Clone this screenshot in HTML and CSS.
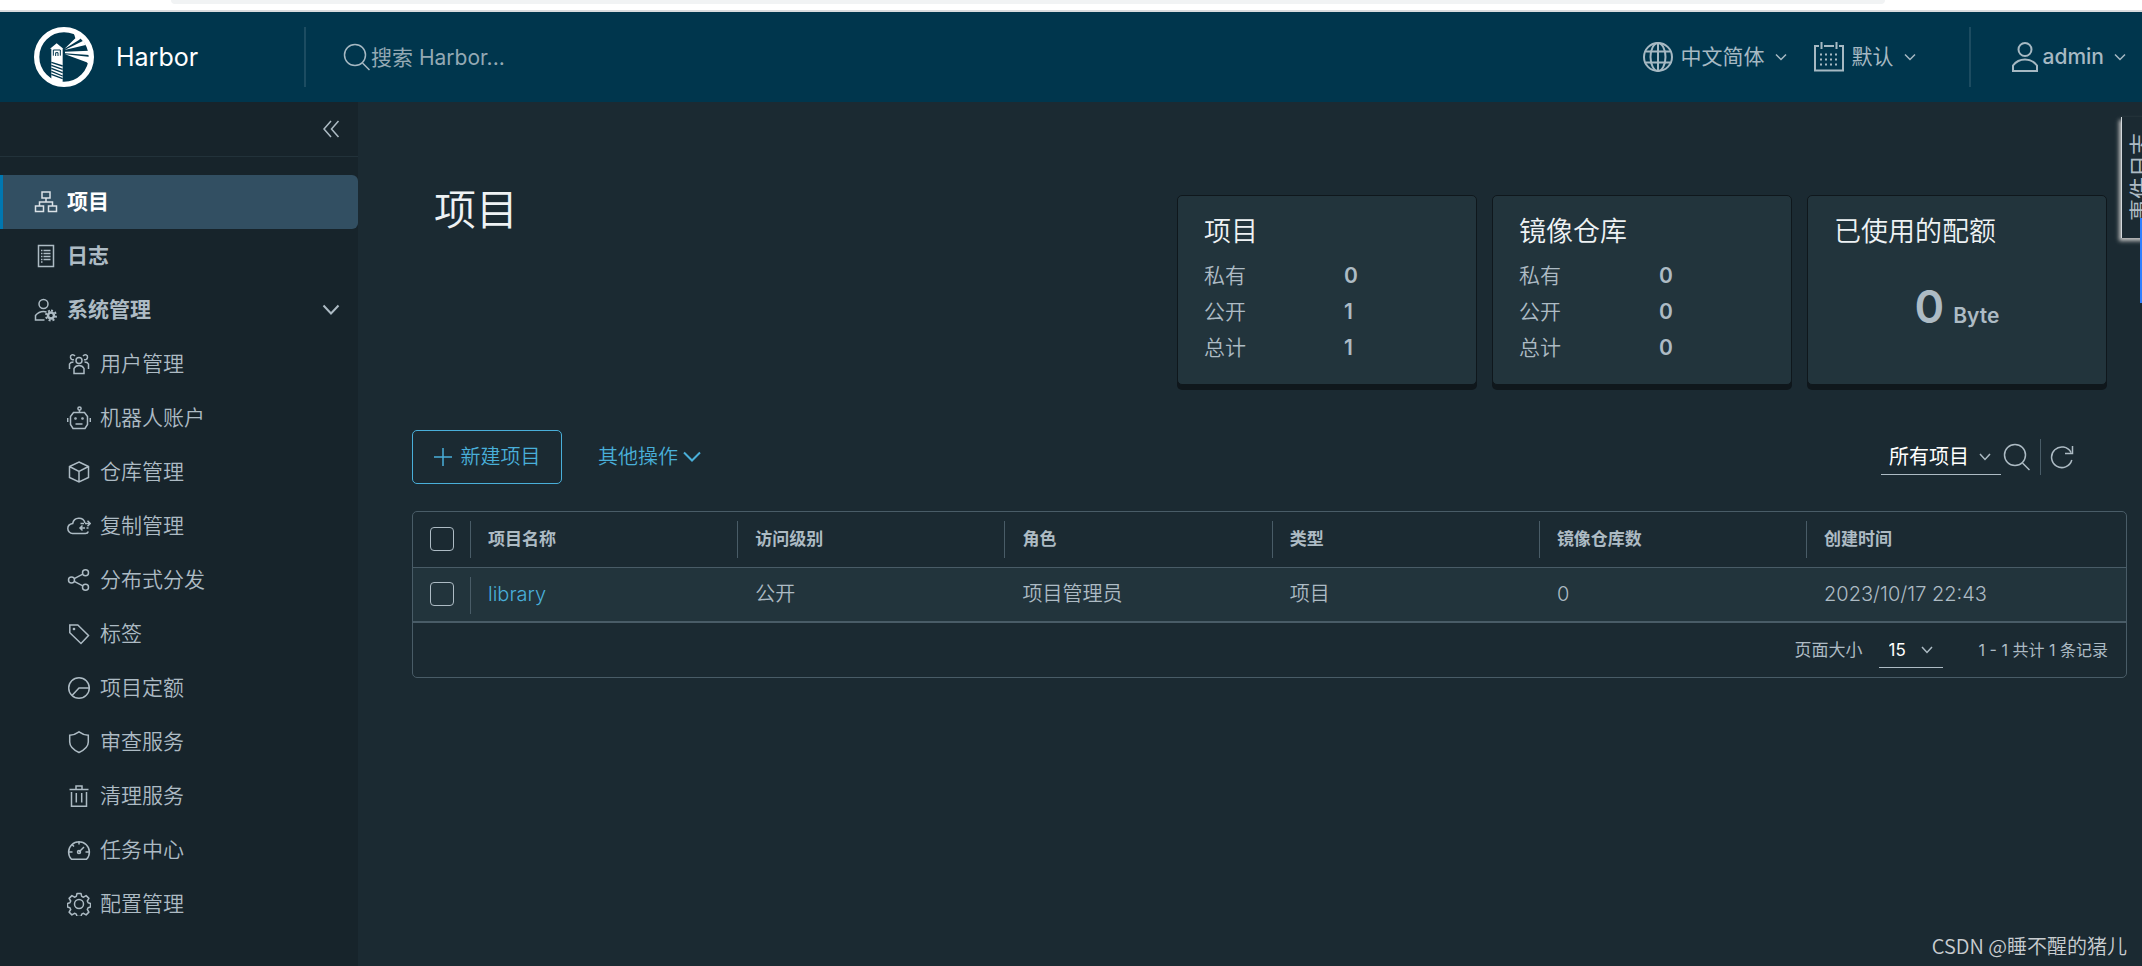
FILE: index.html
```html
<!DOCTYPE html>
<html lang="zh-CN">
<head>
<meta charset="utf-8">
<title>Harbor</title>
<link rel="stylesheet" href="styles.css">
</head>
<body>
<div class="page">
  <div class="browser-edge"><div class="address-bar"></div></div>

  <header class="header">
    <a class="brand" href="#">
      <svg class="logo" viewBox="42 36 180 180" aria-hidden="true">
        <circle cx="132" cy="126" r="82" fill="none" stroke="#fff" stroke-width="16"/>
        <path fill="#fff" d="M133 102 166 70 162 56 186 64 178 74zM134 105 190 77 197 90zM135 110 208 107 208 120 135 115zM135 118 212 126 206 148 200 142z"/>
        <path fill="#fff" d="M90 101 110 85 130 101zM94 101h34v98l-6 14-28-8z"/>
        <path fill="none" stroke="#00364d" stroke-width="3" d="M100 122v-17h21v17M107 123v-10h7v10"/>
        <path fill="none" stroke="#00364d" stroke-width="4" d="M94 142 128 153M94 151 128 163M94 160 128 173M94 169 128 183M94 178 128 191"/>
      </svg>
      <span class="brand-name">Harbor</span>
    </a>
    <label class="search">
      <svg class="icon-search" viewBox="0 0 28 28" aria-hidden="true"><circle cx="12" cy="12" r="10.5"/><path d="M19.500 20 26.500 27"/></svg>
      <input type="search" placeholder="搜索 Harbor..." aria-label="搜索 Harbor">
    </label>
    <div class="header-actions">
      <button class="menu-button menu-language" type="button">
        <svg class="icon-head" viewBox="0 0 30 30" aria-hidden="true"><circle cx="15" cy="15" r="14"/><ellipse cx="15" cy="15" rx="7.500" ry="14"/><path d="M15 1v28M3 9.500h24M3 20.500h24"/></svg>
        <span>中文简体</span>
        <svg class="caret" viewBox="0 0 12 8" aria-hidden="true"><path d="M1 1.500 6 6.500 11 1.500"/></svg>
      </button>
      <button class="menu-button menu-date" type="button">
        <svg class="icon-head" viewBox="0 0 30 30" aria-hidden="true"><path d="M5 4H1v24.500h28V4h-4M10 4h10M7.500 0v7M22.500 0v7"/><path class="dots" d="M6 12.500h18M6 17.500h18M6 22.500h18"/></svg>
        <span>默认</span>
        <svg class="caret" viewBox="0 0 12 8" aria-hidden="true"><path d="M1 1.500 6 6.500 11 1.500"/></svg>
      </button>
      <button class="menu-button menu-user" type="button">
        <svg class="icon-head" viewBox="0 0 30 30" aria-hidden="true"><circle cx="15" cy="7.500" r="6.500"/><path d="M3 29v-5.500C6 19.500 10 17.500 15 17.500s9 2 12 6V29z"/></svg>
        <span class="user-name">admin</span>
        <svg class="caret" viewBox="0 0 12 8" aria-hidden="true"><path d="M1 1.500 6 6.500 11 1.500"/></svg>
      </button>
    </div>
  </header>

  <div class="body">
    <nav class="sidebar" aria-label="主导航">
      <div class="sidebar-top">
        <button class="collapse" type="button" aria-label="收起">
          <svg viewBox="0 0 18 18" aria-hidden="true"><path d="M9 1 2 9 9 17M16.500 1 9.500 9 16.500 17"/></svg>
        </button>
      </div>
      <ul class="nav">
        <li><a class="nav-link active" href="#"><svg class="icon" viewBox="0 0 24 24" aria-hidden="true"><path d="M8 2h8v6H8zM1.500 16h8v5.500h-8zM14.500 16h8v5.500h-8zM12 8v4M5.500 16v-4h13v4"/></svg>项目</a></li>
        <li><a class="nav-link" href="#"><svg class="icon" viewBox="0 0 24 24" aria-hidden="true"><path d="M4.500 1.500h15v21h-15zM9.500 6.500h7M9.500 9.500h7M9.500 12.500h7M9.500 15.500h7M7 6.500h1.500M7 9.500h1.500M7 12.500h1.500M7 15.500h1.500M7 18h1.500"/></svg>日志</a></li>
        <li>
          <a class="nav-link" href="#"><svg class="icon" viewBox="0 0 24 24" aria-hidden="true"><circle cx="9.500" cy="6" r="4.500"/><path d="M10.500 22H1.500v-4.500c2-2.500 4.500-4 8-4 1 0 2 .2 3 .5"/><circle cx="17" cy="17.500" r="3" stroke-width="2.500"/><path stroke-width="2" stroke-dasharray="2 1.930" d="M17 12.500a5 5 0 1 1 0 10 5 5 0 1 1 0-10"/></svg>系统管理
            <svg class="nav-caret" viewBox="0 0 18 12" aria-hidden="true"><path d="M1.500 1.500 9 9.500 16.500 1.500"/></svg></a>
          <ul class="subnav">
            <li><a class="nav-link" href="#"><svg class="icon" viewBox="0 0 24 24" aria-hidden="true"><circle cx="12" cy="8.500" r="3"/><path d="M7 21.500v-5c1-2 3-3 5-3s4 1 5 3v5zM8 4C6 1.500 3 3 3.500 5.500S6 8 7 7.500M16 4c2-2.500 5-1 4.500 1.500S18 8 17 7.500M2.500 17v-5c.5-1 2-2 4-2M21.500 17v-5c-.5-1-2-2-4-2"/></svg>用户管理</a></li>
            <li><a class="nav-link" href="#"><svg class="icon" viewBox="0 0 24 24" aria-hidden="true"><circle cx="12.500" cy="2.500" r="1.600"/><path d="M12.500 4v3M6.500 6.500h11l3 4v8l-2.500 4H6l-2.500-4v-8zM.7 12v4M23.300 12v4M8.500 18h7"/><circle cx="8.500" cy="12.500" r=".6"/><circle cx="15.500" cy="12.500" r=".6"/></svg>机器人账户</a></li>
            <li><a class="nav-link" href="#"><svg class="icon" viewBox="0 0 24 24" aria-hidden="true"><path d="M12 2 21.500 6.500v11L12 22 2.500 17.500v-11zM2.500 6.500 12 11.500l9.500-5M12 11.500V22"/></svg>仓库管理</a></li>
            <li><a class="nav-link" href="#"><svg class="icon" viewBox="0 0 24 24" aria-hidden="true"><path d="M18 9a6.300 6.300 0 0 0-12.300.5C2.500 10 .8 12 .8 14.500S3 19.500 5.500 19.500h13c1.500 0 2.500-1 2.800-2"/><path d="M13.500 9.500h3.500M18 9.500h5M20.500 6.800 23.200 9.500l-2.700 2.700M21.500 14h-2M18 14h-5M15.500 11.500 13 14l2.500 2.500"/></svg>复制管理</a></li>
            <li><a class="nav-link" href="#"><svg class="icon" viewBox="0 0 24 24" aria-hidden="true"><circle cx="4.500" cy="12" r="3"/><circle cx="18.500" cy="4.800" r="3"/><circle cx="18.500" cy="19.200" r="3"/><path d="M7.200 10.600 15.800 6.200M7.200 13.400l8.600 4.400"/></svg>分布式分发</a></li>
            <li><a class="nav-link" href="#"><svg class="icon" viewBox="0 0 24 24" aria-hidden="true"><path d="M2.800 3h8L21.500 13.500 14 21.500 2.800 10.800z"/><circle cx="7" cy="7" r=".6"/></svg>标签</a></li>
            <li><a class="nav-link" href="#"><svg class="icon" viewBox="0 0 24 24" aria-hidden="true"><circle cx="12" cy="12" r="10.300"/><path d="M22.300 12H12L5 19.500"/></svg>项目定额</a></li>
            <li><a class="nav-link" href="#"><svg class="icon" viewBox="0 0 24 24" aria-hidden="true"><path d="M12 1.800C15 4 18 5 21.300 5.300V12c0 4.500-4 8-9.300 10.500C6.700 20 2.700 16.500 2.700 12V5.300C6 5 9 4 12 1.800z"/></svg>审查服务</a></li>
            <li><a class="nav-link" href="#"><svg class="icon" viewBox="0 0 24 24" aria-hidden="true"><path d="M2.500 5.500h19M4.500 8v14.300h15V8M9.300 9v9.500M14.700 9v9.500M9 5.500V2h6v3.500"/></svg>清理服务</a></li>
            <li><a class="nav-link" href="#"><svg class="icon" viewBox="0 0 24 24" aria-hidden="true"><path d="M4.500 21.300h15A10.400 10.400 0 1 0 4.500 21.300zM12 3v3.500M2 14h3.500M22 14h-3.500M5.500 7 7 8.500M12 14l5-5"/><circle cx="12" cy="14" r="1.500"/></svg>任务中心</a></li>
            <li><a class="nav-link" href="#"><svg class="icon" viewBox="0 0 24 24" aria-hidden="true"><circle cx="12" cy="12" r="4.500"/><path stroke-linejoin="round" d="M10 1.500h4l.7 2.900 1.800.8 2.600-1.600 2.800 2.800-1.600 2.600.8 1.800 2.400.7v3.500l-2.400.7-.8 1.800 1.600 2.600-2.800 2.800-2.600-1.600-1.800.8-.7 2.400h-4l-.7-2.400-1.800-.8-2.600 1.600-2.800-2.800 1.600-2.600-.8-1.800-2.400-.7v-3.500l2.400-.7.8-1.800-1.600-2.600 2.800-2.800 2.600 1.600 1.800-.8z"/></svg>配置管理</a></li>
          </ul>
        </li>
      </ul>
    </nav>

    <main class="content">
      <section class="overview">
        <h1 class="title">项目</h1>
        <div class="cards">
          <article class="card">
            <h2>项目</h2>
            <dl>
              <dt>私有</dt><dd>0</dd>
              <dt>公开</dt><dd>1</dd>
              <dt>总计</dt><dd>1</dd>
            </dl>
          </article>
          <article class="card">
            <h2>镜像仓库</h2>
            <dl>
              <dt>私有</dt><dd>0</dd>
              <dt>公开</dt><dd>0</dd>
              <dt>总计</dt><dd>0</dd>
            </dl>
          </article>
          <article class="card">
            <h2>已使用的配额</h2>
            <p class="quota"><span class="quota-value">0</span><span class="quota-unit">Byte</span></p>
          </article>
        </div>
      </section>

      <div class="toolbar">
        <button class="btn btn-outline" type="button">
          <svg class="icon-plus" viewBox="0 0 18 18" aria-hidden="true"><path d="M9 0v18M0 9h18"/></svg>新建项目
        </button>
        <button class="btn" type="button">其他操作<svg class="btn-caret" viewBox="0 0 18 12" aria-hidden="true"><path d="M1 1.500 9 9.500 17 1.500"/></svg></button>
        <div class="filters">
          <div class="select-box filter-select">
            <select aria-label="项目类型"><option>所有项目</option><option>私有项目</option><option>公开项目</option></select>
            <svg class="caret" viewBox="0 0 12 8" aria-hidden="true"><path d="M1 1 6 6.500 11 1"/></svg>
          </div>
          <button class="icon-button" type="button" aria-label="搜索"><svg class="icon-search" viewBox="0 0 28 28" aria-hidden="true"><circle cx="12" cy="12" r="10.500"/><path d="M19.500 20 26.500 27"/></svg></button>
          <button class="icon-button refresh" type="button" aria-label="刷新"><svg viewBox="0 0 24 24" aria-hidden="true"><path d="M21.800 15A10.300 10.300 0 1 1 21 7.500M22.500 1v7.500H15"/></svg></button>
        </div>
      </div>

      <div class="datagrid">
        <table>
          <thead>
            <tr>
              <th class="col-check"><input type="checkbox" aria-label="全选"></th>
              <th class="col">项目名称</th>
              <th class="col">访问级别</th>
              <th class="col">角色</th>
              <th class="col">类型</th>
              <th class="col">镜像仓库数</th>
              <th>创建时间</th>
            </tr>
          </thead>
          <tbody>
            <tr>
              <td class="col-check"><input type="checkbox" aria-label="选择 library"></td>
              <td><a href="#">library</a></td>
              <td>公开</td>
              <td>项目管理员</td>
              <td>项目</td>
              <td>0</td>
              <td>2023/10/17 22:43</td>
            </tr>
          </tbody>
        </table>
        <div class="grid-footer">
          <label for="page-size">页面大小</label>
          <div class="select-box size-select">
            <select id="page-size"><option>15</option><option>25</option><option>50</option></select>
            <svg class="caret" viewBox="0 0 12 8" aria-hidden="true"><path d="M1 1 6 6.500 11 1"/></svg>
          </div>
          <span class="record-count">1 - 1 共计 1 条记录</span>
        </div>
      </div>
    </main>
  </div>

  <div class="event-dock">
    <button class="event-tab" type="button"><span>事件日志</span></button>
    <div class="scroll-marker"></div>
  </div>
  <div class="watermark">CSDN @睡不醒的猪儿</div>
</div>
</body>
</html>
```
FILE: styles.css
```css
* { box-sizing: border-box; }

body {
  margin: 0;
  background: #1b2a32;
  color: #adbbc4;
  font-family: Inter, "Noto Sans CJK SC", sans-serif;
  font-size: 21px;
  line-height: 36px;
}

button, input, select { font: inherit; color: inherit; }
button { background: none; border: 0; padding: 0; cursor: pointer; }
a { color: inherit; text-decoration: none; }
ul, dl, p, h1, h2 { margin: 0; padding: 0; }
ul { list-style: none; }

svg {
  display: block;
  flex: none;
  fill: none;
  stroke: currentColor;
  stroke-width: 1.5;
}

.page {
  position: relative;
  display: flex;
  flex-direction: column;
  min-height: 100vh;
  overflow: hidden;
}

.browser-edge {
  height: 12px;
  padding: 0 12% 0 8%;
  background: #fff;
  border-bottom: 2px solid #d9dcde;
}
.address-bar {
  height: 4px;
  background: #f1f3f4;
  border-radius: 0 0 12px 12px;
}

/* Header */
.header {
  display: flex;
  align-items: center;
  height: 90px;
  background: #00364d;
  color: #a6b9c3;
}
.brand {
  display: flex;
  align-items: center;
  gap: 22px;
  width: 306px;
  height: 60px;
  padding-left: 34px;
  border-right: 2px solid #1c4c61;
  color: #fff;
}
.logo { width: 60px; height: 60px; stroke: none; }
.brand-name { font-size: 25px; }
.search {
  display: flex;
  align-items: center;
  flex: 1;
  margin-left: 37px;
}
.icon-search { width: 28px; height: 28px; }
.search input {
  flex: 1;
  min-width: 0;
  padding: 2px 0 0;
  background: none;
  border: 0;
  outline: 0;
}
.search input::placeholder { color: #94a9b4; opacity: 1; }
.header-actions { display: flex; align-items: center; }
.menu-button { display: flex; align-items: center; }
.icon-head { width: 30px; height: 30px; stroke-width: 2; }
.icon-head .dots { stroke-dasharray: 2 3; }
.caret { width: 12px; height: 8px; }
.menu-button .caret { margin-left: 10px; }
.menu-language { margin-right: 27px; }
.menu-language span, .menu-date span { margin-left: 8px; }
.menu-date { margin-right: 53px; }
.menu-user {
  height: 60px;
  padding: 0 16px 0 39px;
  border-left: 2px solid #1c4c61;
}
.user-name { margin-left: 3px; font-weight: 500; }

/* Sidebar */
.body { display: flex; flex: 1; }
.sidebar {
  flex: none;
  width: 358px;
  background: #17242b;
}
.sidebar-top {
  display: flex;
  justify-content: flex-end;
  align-items: center;
  height: 55px;
  padding-right: 18px;
  border-bottom: 1px solid #22323a;
}
.collapse svg { width: 18px; height: 18px; }
.nav { padding-top: 18px; }
.nav-link {
  display: flex;
  align-items: center;
  gap: 9px;
  height: 54px;
  padding: 0 18px 0 34px;
  font-weight: 700;
}
.nav-link.active {
  padding-left: 31px;
  background: #324f62;
  border-left: 3px solid #0077b0;
  border-radius: 0 6px 6px 0;
  color: #fff;
}
.nav-link.active .icon { color: #dbe2e7; }
.subnav .nav-link { padding-left: 67px; font-weight: 350; }
.icon { width: 24px; height: 24px; }
.nav-caret { width: 18px; height: 12px; margin-left: auto; stroke-width: 2; }

/* Overview */
.content {
  flex: 1;
  min-width: 0;
  padding: 81px 15px 54px 54px;
}
.overview {
  display: flex;
  justify-content: space-between;
  padding: 0 20px 0 22px;
}
.title {
  color: #eef2f4;
  font-size: 42px;
  font-weight: 350;
  line-height: 54px;
}
.cards { display: flex; gap: 15px; margin-top: 12px; }
.card {
  width: 300px;
  padding: 18px 26px;
  background: #22343c;
  border: 1px solid #0f171c;
  border-radius: 5px;
  box-shadow: 0 5px 0 #0f171c;
}
.card h2 {
  margin-bottom: 8px;
  color: #eef2f4;
  font-size: 27px;
  font-weight: 350;
}
.card dl { display: grid; grid-template-columns: 140px 1fr; }
.card dt { font-weight: 350; }
.card dd { margin: 0; font-weight: 600; }
.quota {
  display: flex;
  justify-content: center;
  align-items: baseline;
  gap: 9px;
  padding-top: 31px;
  font-weight: 600;
}
.quota-value { font-size: 45px; }

/* Toolbar */
.toolbar { display: flex; align-items: center; margin: 45px 0 27px; }
.btn {
  display: flex;
  align-items: center;
  height: 54px;
  color: #49afd9;
  font-size: 20px;
  font-weight: 350;
}
.btn-outline {
  gap: 9px;
  width: 150px;
  justify-content: center;
  margin-right: 36px;
  border: 1px solid #49afd9;
  border-radius: 5px;
}
.icon-plus { width: 18px; height: 18px; }
.btn-caret { width: 18px; height: 12px; margin-left: 5px; stroke-width: 2; }
.filters {
  display: flex;
  align-items: center;
  height: 36px;
  margin: 0 53px 0 auto;
}
.select-box {
  display: flex;
  align-items: center;
  border-bottom: 1px solid #adbbc4;
  color: #fff;
}
.select-box select {
  flex: 1;
  min-width: 0;
  padding: 0;
  appearance: none;
  background: none;
  border: 0;
}
.select-box .caret { color: #adbbc4; }
.filter-select {
  width: 120px;
  height: 36px;
  padding: 0 10px 0 8px;
  font-size: 20px;
}
.icon-button { display: flex; align-items: center; height: 36px; }
.filters .icon-search { margin: 0 9px 0 2px; }
.refresh { padding-left: 9px; border-left: 1px solid #495c67; }
.refresh svg { width: 24px; height: 24px; }

/* Data grid */
.datagrid { border: 1px solid #495c67; border-radius: 5px; }
table { width: 100%; border-collapse: collapse; table-layout: fixed; }
th, td {
  position: relative;
  height: 55px;
  padding: 0 17px;
  border-bottom: 1px solid #495c67;
  text-align: left;
}
th { font-size: 17px; font-weight: 700; }
td {
  border-bottom-width: 2px;
  background: #22343c;
  font-size: 20px;
  font-weight: 350;
}
td a { color: #49afd9; }
.col { width: 15.6%; }
th:not(:last-child)::after, td.col-check::after {
  content: "";
  position: absolute;
  top: 9px;
  right: 0;
  height: 37px;
  border-right: 1px solid #495c67;
}
.col-check { width: 58px; }
input[type="checkbox"] {
  display: block;
  width: 24px;
  height: 24px;
  margin: 0;
  appearance: none;
  border: 1px solid #adbbc4;
  border-radius: 4px;
}
.grid-footer {
  display: flex;
  justify-content: flex-end;
  align-items: center;
  height: 54px;
  padding-right: 18px;
  font-size: 17px;
}
.record-count { font-size: 16px; }
.size-select {
  width: 64px;
  height: 36px;
  margin: 0 36px 0 16px;
  padding: 0 10px;
}

/* Event log tab at the window edge */
.event-dock {
  position: absolute;
  top: 117px;
  right: 0;
  width: 36px;
  height: 200px;
  padding-left: 15px;
}
.event-tab {
  display: flex;
  align-items: center;
  width: 42px;
  height: 121px;
  padding: 0 6px;
  background: #1b2a32;
  border-left: 1px solid #d5dadd;
  box-shadow: -2px 3px 4px #c0c0c0;
  font-size: 22px;
}
.event-tab span {
  writing-mode: vertical-rl;
  text-orientation: sideways;
  line-height: 24px;
  transform: rotate(180deg);
}
.scroll-marker {
  position: absolute;
  top: 101px;
  right: 0;
  width: 2px;
  height: 85px;
  background: #2f80ff;
}

.watermark {
  position: absolute;
  right: 15px;
  bottom: 2px;
  color: #c9cdd0;
  font-family: "Noto Sans CJK SC", sans-serif;
  font-size: 20px;
  font-weight: 350;
}
```
